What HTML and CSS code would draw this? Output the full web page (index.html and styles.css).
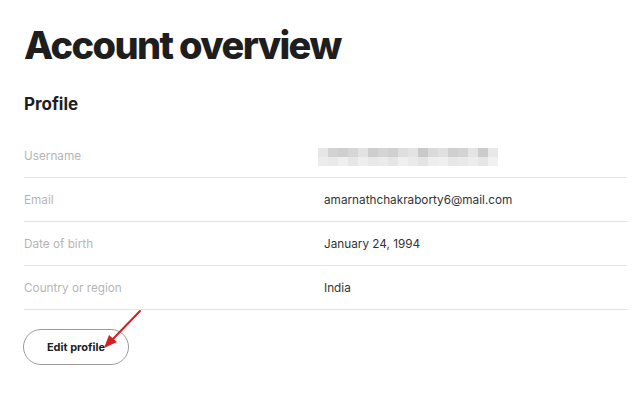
FILE: index.html
```html
<!DOCTYPE html>
<html lang="en">
<head>
  <meta charset="UTF-8" />
  <title>Account overview</title>
  <link rel="stylesheet" href="styles.css">
</head>
<body>

<div class="page">
  <h1>Account overview</h1>
  <h2>Profile</h2>

  <div class="profile-table">
    <div class="row">
      <span class="label">Username</span>
      <span class="value">
        <span class="blur">
          <i style="background:#e6e6e6"></i><i style="background:#d2d2d2"></i><i style="background:#cfcfcf"></i><i style="background:#d6d6d6"></i><i style="background:#e2e2e2"></i><i style="background:#cdcdcd"></i><i style="background:#d4d4d4"></i><i style="background:#d0d0d0"></i><i style="background:#dedede"></i><i style="background:#e3e3e3"></i><i style="background:#c9c9c9"></i><i style="background:#dadada"></i><i style="background:#e0e0e0"></i><i style="background:#cfcfcf"></i><i style="background:#d3d3d3"></i><i style="background:#e4e4e4"></i><i style="background:#cccccc"></i><i style="background:#e8e8e8"></i>
          <i style="background:#ececec"></i><i style="background:#e9e9e9"></i><i style="background:#efefef"></i><i style="background:#e6e6e6"></i><i style="background:#eeeeee"></i><i style="background:#e8e8e8"></i><i style="background:#ebebeb"></i><i style="background:#e5e5e5"></i><i style="background:#efefef"></i><i style="background:#eaeaea"></i><i style="background:#e4e4e4"></i><i style="background:#eeeeee"></i><i style="background:#f0f0f0"></i><i style="background:#e7e7e7"></i><i style="background:#e9e9e9"></i><i style="background:#ededed"></i><i style="background:#e6e6e6"></i><i style="background:#f1f1f1"></i>
        </span>
      </span>
    </div>
    <div class="row">
      <span class="label">Email</span>
      <span class="value">amarnathchakraborty6@mail.com</span>
    </div>
    <div class="row">
      <span class="label">Date of birth</span>
      <span class="value">January 24, 1994</span>
    </div>
    <div class="row">
      <span class="label">Country or region</span>
      <span class="value">India</span>
    </div>
  </div>

  <div class="actions">
    <button class="edit-btn">Edit profile</button>
    <svg class="arrow" width="44" height="44" viewBox="0 0 44 44">
      <line x1="40" y1="3" x2="11" y2="33" stroke="#d42020" stroke-width="2" stroke-linecap="round"/>
      <polygon points="4,40 9,27 17,34" fill="#d42020"/>
    </svg>
  </div>
</div>

</body>
</html>
```

FILE: styles.css
```css
body {
  margin: 0;
  background: #fff;
  font-family: Inter, "Liberation Sans", sans-serif;
  color: #222;
}
.page {
  padding: 22px 13px 0 24px;
}
h1 {
  margin: 0;
  font-size: 38px;
  font-weight: 800;
  letter-spacing: -1.6px;
  line-height: 46px;
  color: #1e1e1e;
}
h2 {
  margin: 25px 0 0;
  font-size: 17px;
  font-weight: 700;
  line-height: 22px;
  color: #1e1e1e;
}
.profile-table {
  margin-top: 19px;
}
.row {
  display: grid;
  grid-template-columns: 300px 1fr;
  align-items: center;
  height: 43px;
  border-bottom: 1px solid #e3e3e3;
  font-size: 11.75px;
}
.label {
  color: #b5b5b5;
}
.value {
  color: #333;
}
.blur {
  display: grid;
  grid-template-columns: repeat(18, 10px);
  grid-auto-rows: 9px;
  width: 180px;
  margin-left: -6px;
  margin-top: 2px;
}
.blur i {
  display: block;
}
.actions {
  position: relative;
  padding-top: 19px;
}
.edit-btn {
  width: 106px;
  height: 36px;
  border: 1px solid #9a9a9a;
  border-radius: 18px;
  background: #fff;
  font-family: Inter, "Liberation Sans", sans-serif;
  font-size: 11px;
  font-weight: 700;
  color: #222;
  margin-left: -1px;
}
.arrow {
  position: absolute;
  left: 76px;
  top: -2px;
}
```
